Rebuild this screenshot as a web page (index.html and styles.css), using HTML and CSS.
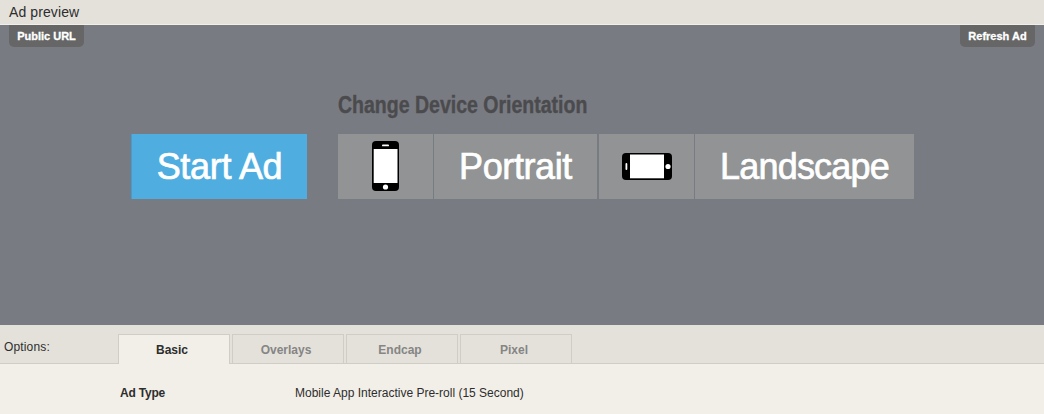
FILE: index.html
```html
<!DOCTYPE html>
<html lang="en">
<head>
<meta charset="utf-8">
<title>Ad preview</title>
<link rel="stylesheet" href="styles.css">
</head>
<body>
<header class="header"><span class="header-title">Ad preview</span></header>
<main class="preview">
  <div class="links">
    <a class="link">Public URL</a>
    <a class="link">Refresh Ad</a>
  </div>
  <div class="controls">
    <button class="start"><span class="start-text">Start Ad</span></button>
    <section class="orientation">
      <h2 class="heading">Change Device Orientation</h2>
      <div class="tiles">
        <div class="tile icon phone-upright">
          <svg width="27" height="50" viewBox="0 0 27 50">
            <rect width="27" height="50" rx="4"/>
            <rect x="1.7" y="8" width="23.8" height="34" fill="#fff"/>
            <rect x="10" y="3.5" width="7" height="1.8" rx=".9" fill="#fff"/>
            <circle cx="13.5" cy="46" r="2.6" fill="#fff"/>
          </svg>
        </div>
        <div class="tile portrait"><span class="portrait-text">Portrait</span></div>
        <div class="tile icon">
          <svg width="50" height="27" viewBox="0 0 50 27">
            <rect width="50" height="27" rx="4"/>
            <rect x="8" y="1.5" width="34" height="23.8" fill="#fff"/>
            <rect x="3.5" y="10" width="1.8" height="7" rx=".9" fill="#fff"/>
            <circle cx="46" cy="13.5" r="2.6" fill="#fff"/>
          </svg>
        </div>
        <div class="tile landscape"><span class="landscape-text">Landscape</span></div>
      </div>
    </section>
  </div>
</main>
<nav class="options">
  <span class="options-label">Options:</span>
  <div class="tabs">
    <a class="tab active">Basic</a>
    <a class="tab">Overlays</a>
    <a class="tab">Endcap</a>
    <a class="tab">Pixel</a>
  </div>
</nav>
<section class="details">
  <b class="name">Ad Type</b>
  <span class="value">Mobile App Interactive Pre-roll (15 Second)</span>
</section>
</body>
</html>
```
FILE: styles.css
```css
* { box-sizing: border-box; }
body {
  margin: 0;
  height: 414px;
  overflow: hidden;
  background: #f2efe8;
  color: #2d2d2d;
  font: 12px/16px "Liberation Sans", Arial, sans-serif;
}
.header {
  height: 25px;
  padding: 3px 9px;
  background: #e4e1da;
  border-bottom: 1px solid #f2efe8;
  font-size: 14px;
  line-height: 18px;
}
.header-title { letter-spacing: 0.1px; }
.preview { height: 300px; background: #797b83; }
.links { display: flex; justify-content: space-between; padding: 0 9px; }
.link {
  width: 75px;
  height: 22px;
  border-radius: 0 0 5px 5px;
  background: #666;
  color: #fff;
  font-size: 11px;
  font-weight: bold;
  line-height: 22px;
  text-align: center;
  white-space: nowrap;
  -webkit-text-stroke: 0.3px #fff;
}
.controls { display: flex; align-items: flex-end; gap: 31px; padding: 42px 0 0 131px; }
.start {
  width: 176px;
  height: 65px;
  padding: 0;
  border: 0;
  border-left: 1px solid #3f9fd4;
  background: #50ade0;
  color: #fff;
  font: 36px/65px "Liberation Sans", Arial, sans-serif;
  -webkit-text-stroke: 0.7px #fff;
}
.start-text { letter-spacing: -0.3px; }
.heading {
  margin: 0 0 14px;
  width: 305px;
  height: 31px;
  color: #4b4b4d;
  font-size: 24px;
  line-height: 31px;
  white-space: nowrap;
  transform: scaleX(0.813);
  transform-origin: left;
  -webkit-text-stroke: 0.4px #4b4b4d;
}
.tiles { display: flex; }
.tile {
  display: flex;
  align-items: center;
  justify-content: center;
  height: 65px;
  background: #919394;
  color: #fff;
  font-size: 36px;
  -webkit-text-stroke: 0.7px #fff;
}
.icon { width: 95px; margin-right: 1px; }
.phone-upright { padding-bottom: 1px; }
.portrait { width: 163px; margin-right: 2px; }
.landscape { width: 219px; }
.portrait-text { letter-spacing: -0.4px; }
.landscape-text { letter-spacing: -0.8px; }
.options {
  display: flex;
  height: 39px;
  background: #e4e1da;
  border-bottom: 1px solid #d0cdc6;
}
.options-label { width: 118px; padding: 14px 0 0 4px; letter-spacing: 0.15px; }
.tabs { display: flex; gap: 2px; padding-top: 9px; }
.tab {
  width: 112px;
  height: 29px;
  border: 1px solid #d0cdc6;
  border-bottom: 0;
  color: #858585;
  font-weight: bold;
  line-height: 30px;
  padding-right: 4px;
  text-align: center;
}
.active { height: 30px; background: #f2efe8; color: #2d2d2d; }
.details { display: flex; padding: 21px 0 0 120px; }
.name { width: 175px; letter-spacing: -0.2px; }
```
